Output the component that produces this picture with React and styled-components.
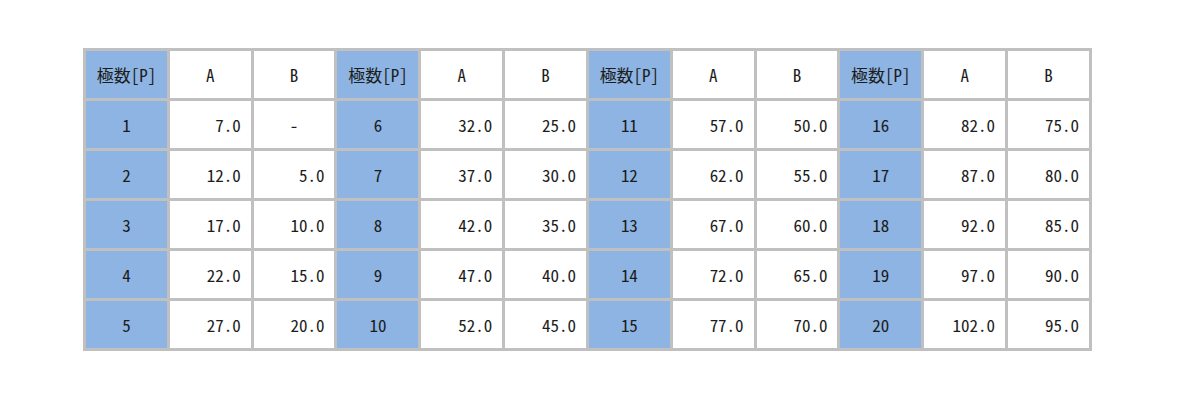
import React from "react";
import styled, { createGlobalStyle } from "styled-components";

const GlobalStyle = createGlobalStyle`
  body {
    margin: 0;
    background: #ffffff;
    font-family: "Noto Sans Mono CJK JP", "Noto Sans CJK JP", "Liberation Mono", monospace;
  }
`;

const Page = styled.div`
  width: 1177px;
  height: 401px;
  padding: 48px 0 0 83px;
  box-sizing: border-box;
`;

const Table = styled.table`
  border-collapse: separate;
  border-spacing: 3px;
  background: #c0c0c0;
  width: 1009px;
  height: 303px;
  table-layout: fixed;
`;

const Cell = styled.td`
  background: ${(p) => (p.$pole ? "#8db4e2" : "#ffffff")};
  height: 47px;
  padding: 0 10px;
  font-size: 17px;
  color: #1c1c1c;
  text-align: ${(p) => (p.$num ? "right" : "center")};
  vertical-align: middle;
  white-space: nowrap;
`;

const rows = [
  [[1, "7.0", null], [6, "32.0", "25.0"], [11, "57.0", "50.0"], [16, "82.0", "75.0"]],
  [[2, "12.0", "5.0"], [7, "37.0", "30.0"], [12, "62.0", "55.0"], [17, "87.0", "80.0"]],
  [[3, "17.0", "10.0"], [8, "42.0", "35.0"], [13, "67.0", "60.0"], [18, "92.0", "85.0"]],
  [[4, "22.0", "15.0"], [9, "47.0", "40.0"], [14, "72.0", "65.0"], [19, "97.0", "90.0"]],
  [[5, "27.0", "20.0"], [10, "52.0", "45.0"], [15, "77.0", "70.0"], [20, "102.0", "95.0"]],
];

export default function App() {
  return (
    <Page>
      <GlobalStyle />
      <Table>
        <tbody>
          <tr>
            {[0, 1, 2, 3].map((i) => (
              <React.Fragment key={i}>
                <Cell $pole>極数[P]</Cell>
                <Cell>A</Cell>
                <Cell>B</Cell>
              </React.Fragment>
            ))}
          </tr>
          {rows.map((row, r) => (
            <tr key={r}>
              {row.map(([p, a, b]) => (
                <React.Fragment key={p}>
                  <Cell $pole>{p}</Cell>
                  <Cell $num>{a}</Cell>
                  {b ? <Cell $num>{b}</Cell> : <Cell>-</Cell>}
                </React.Fragment>
              ))}
            </tr>
          ))}
        </tbody>
      </Table>
    </Page>
  );
}
